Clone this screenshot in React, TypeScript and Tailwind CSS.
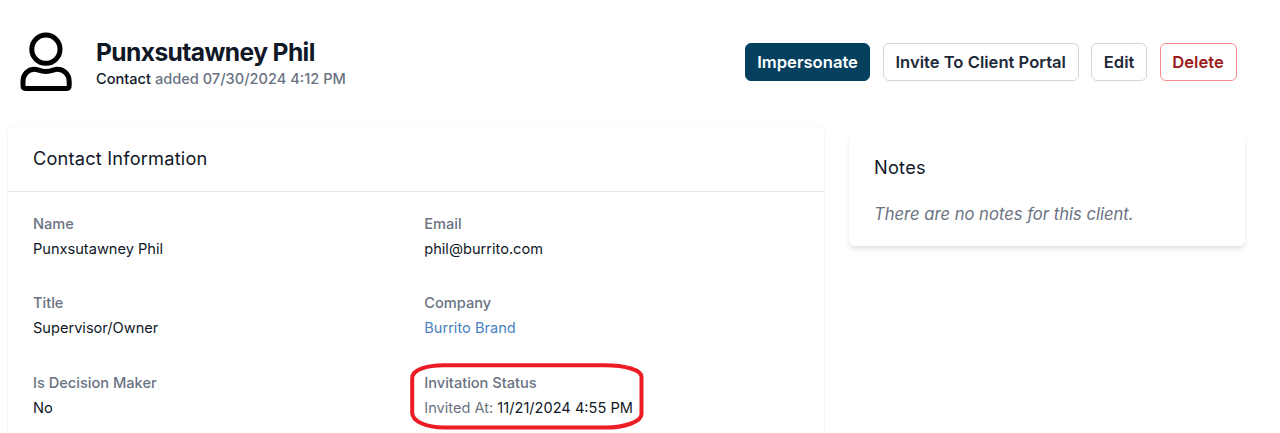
import clsx from "clsx";

type Field = {
  label: string;
  value: React.ReactNode;
  highlighted?: boolean;
};

const fields: Field[] = [
  { label: "Name", value: "Punxsutawney Phil" },
  { label: "Email", value: "phil@burrito.com" },
  { label: "Title", value: "Supervisor/Owner" },
  { label: "Company", value: <a href="#" className="text-[#4a7fc1]">Burrito Brand</a> },
  { label: "Is Decision Maker", value: "No" },
  {
    label: "Invitation Status",
    value: <><span className="text-gray-500">Invited At:</span> 11/21/2024 4:55 PM</>,
    highlighted: true,
  },
];

const actions = [
  { label: "Impersonate", className: "w-[125.5px] border-[#05405f] bg-[#05405f] text-white" },
  { label: "Invite To Client Portal", className: "w-[196px] border-gray-300 text-gray-800" },
  { label: "Edit", className: "w-[56px] border-gray-300 text-gray-800" },
  { label: "Delete", className: "w-[77px] border-[#f98a8a] text-[#991b1b]" },
];

function PersonIcon() {
  return (
    <svg width="52" height="60" viewBox="0 0 52 60" fill="none" stroke="#000" strokeWidth="5" className="shrink-0">
      <circle cx="25.9" cy="17.2" r="14.1" />
      <path
        d="M14.5 37.2C18.3 37.2 19.5 39.4 25.9 39.4C32.3 39.4 33.5 37.2 37.3 37.2C44 37.2 49.2 42.5 49.2 49.4V53.2C49.2 55 48.6 56.4 46.8 56.4H5.4C3.6 56.4 3 55 3 53.2V49.4C3 42.5 7.8 37.2 14.5 37.2Z"
        strokeLinejoin="round"
      />
    </svg>
  );
}

function Highlight() {
  return (
    <svg
      width="234"
      height="68"
      viewBox="0 0 234 68"
      fill="none"
      className="pointer-events-none absolute -left-[14px] -top-[8px]"
    >
      <path
        d="M2.2 15C2.2 7 16 2.2 34 2.2H194C216 2.2 231.5 7 231.5 14V51C231.5 59 214 64.5 196 64.5H34C16 64.5 2.2 58 2.2 50Z"
        stroke="#ed1c24"
        strokeWidth="4"
      />
    </svg>
  );
}

export default function App() {
  return (
    <div className="h-[433px] overflow-hidden bg-white pl-2 pr-[35px] font-['Inter',sans-serif] text-gray-900">
      <header className="flex h-[124.5px] items-start pl-3 pr-[8.5px]">
        <div className="flex pt-8">
          <PersonIcon />
          <div className="ml-6 pt-1">
            <h1 className="h-[33px] whitespace-nowrap text-[24.6px] font-bold leading-[32px] tracking-[-0.6px]">Punxsutawney Phil</h1>
            <p className="whitespace-nowrap text-[14.6px] font-medium leading-[21px] text-gray-500">
              <span className="text-gray-900">Contact</span> added 07/30/2024 4:12 PM
            </p>
          </div>
        </div>
        <div className="ml-auto flex gap-[12.4px] pt-[43px]">
          {actions.map((action) => (
            <button
              key={action.label}
              className={clsx(
                "h-[38px] whitespace-nowrap rounded-md border text-center text-[16.6px] font-semibold leading-[36px]",
                action.className
              )}
            >
              {action.label}
            </button>
          ))}
        </div>
      </header>

      <main className="flex items-start gap-[25px]">
        <section className="h-[330px] w-[816px] rounded-lg shadow-[0_1px_3px_rgba(0,0,0,0.08),0_0_2px_rgba(0,0,0,0.06)]">
          <h2 className="h-[67.5px] border-b border-gray-200 px-[25px] text-[18.2px] leading-[67px] tracking-[0.2px]">Contact Information</h2>
          <dl className="grid grid-cols-2 gap-x-[16.5px] gap-y-[29.4px] px-[25px] pt-[20px]">
            {fields.map((field) => (
              <div key={field.label} className="relative h-[50px] whitespace-nowrap text-[14.6px] leading-[25px]">
                <dt className="font-medium text-gray-500">{field.label}</dt>
                <dd>{field.value}</dd>
                {field.highlighted && <Highlight />}
              </div>
            ))}
          </dl>
        </section>

        <aside className="mt-[9px] h-[112.5px] w-[396px] rounded-md px-[25px] pt-[20px] shadow-[0_4px_6px_-1px_rgba(0,0,0,0.1),0_2px_4px_-1px_rgba(0,0,0,0.06)]">
          <h2 className="text-[18.2px] leading-[26px] tracking-[0.25px]">Notes</h2>
          <p className="mt-[21.5px] text-[16.6px] italic leading-[26px] text-gray-500">There are no notes for this client.</p>
        </aside>
      </main>
    </div>
  );
}
